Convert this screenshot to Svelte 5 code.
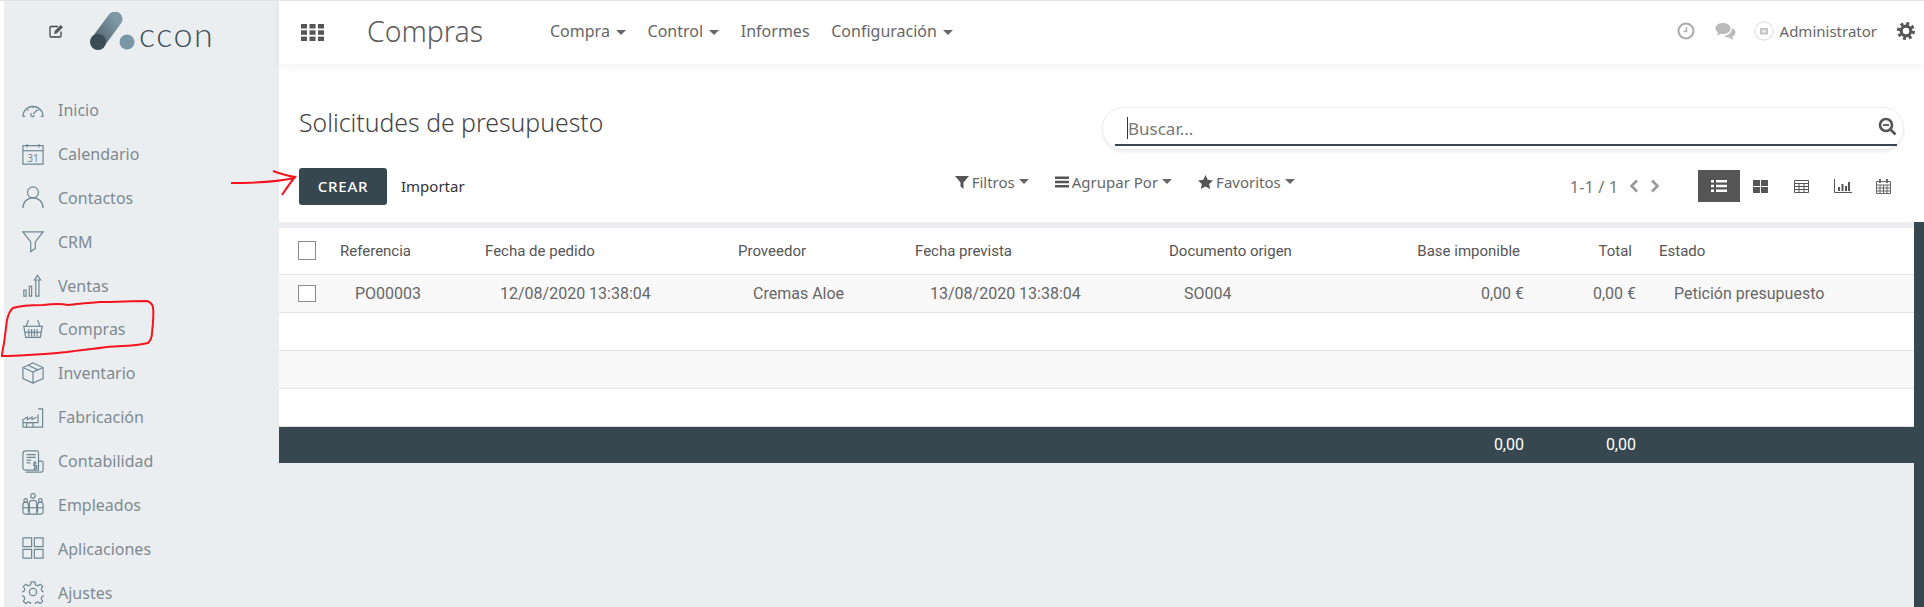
<script>
  const nav = [
    { label: 'Inicio', paths: ['M1 20a11 11 0 0 1 22 0', 'M1 20h2.500M20.500 20H23', 'M12 17.500l4.500-4.500', 'M5.500 12.500l1.500 1M12 9v2M18.500 12.500l-1.500 1M8.500 9.500l.6 1.500M15.500 9.500l-.6 1.500', 'M10.500 16.500a2 2 0 1 0 3 2'] },
    { label: 'Calendario', paths: ['M1 4h22v20H1z', 'M1 9.500h22', 'M5.500 2v4M18.500 2v4'], num: '31' },
    { label: 'Contactos', paths: ['M6 7a6 6 0 1 0 12 0a6 6 0 1 0-12 0', 'M1 24c0-6.500 4.500-11 11-11s11 4.500 11 11'] },
    { label: 'CRM', paths: ['M1 2h22l-8.500 11v7l-5 3.500V13z'] },
    { label: 'Ventas', paths: ['M2 17.500h2.500v6.500H2zM8 13.500h2.500v10.500H8z', 'M15 6.500v17.500h3.500V6.500', 'M13.500 6.500l3.300-5 3.500 5z'] },
    { label: 'Compras', paths: ['M1 9h22', 'M2 9l2 12h16l2-12', 'M7 2L4.500 9M17 2l2.500 7', 'M7.500 12v8M10.500 12v8M13.500 12v8M16.500 12v8', 'M3 15.500h18'] },
    { label: 'Inventario', paths: ['M12 1l11 5v12l-11 5-11-5V6z', 'M1 6l11 5 11-5', 'M12 11v12', 'M6.500 3.500l11 5'] },
    { label: 'Fabricación', paths: ['M1 23V15l5-3v3l5-3v3l5-3', 'M17.500 3h5v20H1', 'M5 23v-5h7v5', 'M1 18h16.500V9'] },
    { label: 'Contabilidad', paths: ['M4 1h12a2 2 0 0 1 2 2v19H4a3 3 0 0 1-3-3V4a3 3 0 0 1 3-3z', 'M18 12h3a2 2 0 0 1 2 2v8a2 2 0 0 1-2 2H4', 'M5 5h10M5 8h10M5 11h5M5 14h4', 'M14 12v10M16 14h-3v3h3v3h-3'] },
    { label: 'Empleados', paths: ['M9.500 3a2.500 2.500 0 1 0 5 0a2.500 2.500 0 1 0-5 0', 'M2 8a2 2 0 1 0 4 0a2 2 0 1 0-4 0M18 8a2 2 0 1 0 4 0a2 2 0 1 0-4 0', 'M1 21V13q0-3 3-3t3 3v8', 'M17 21V13q0-3 3-3t3 3v8', 'M8 23V11q0-3 4-3t4 3v12', 'M1 16h22', 'M1 21q0 2 3 2h16q3 0 3-2'] },
    { label: 'Aplicaciones', paths: ['M1 1h9.500v9.500H1zM13.500 1H23v9.500h-9.500zM1 13.500h9.500V23H1zM13.500 13.500H23V23h-9.500z'] },
    { label: 'Ajustes', paths: ['M8 12a4 4 0 1 0 8 0a4 4 0 1 0-8 0', 'M10 1h4l.6 3 2.700 1.100 2.600-1.700 2.700 2.700-1.700 2.600 1.100 2.700 3 .6v4l-3 .6-1.100 2.700 1.700 2.600-2.700 2.700-2.600-1.700-2.700 1.100-.6 3h-4l-.6-3-2.700-1.100-2.600 1.700-2.700-2.700 1.700-2.600-1.100-2.700-3-.6v-4l3-.6 1.100-2.700-1.700-2.600 2.700-2.700 2.600 1.700L9.400 4z'] }
  ];
  const menus = [
    { label: 'Compra', caret: true },
    { label: 'Control', caret: true },
    { label: 'Informes', caret: false },
    { label: 'Configuración', caret: true }
  ];
  const columns = [
    { label: 'Referencia' },
    { label: 'Fecha de pedido' },
    { label: 'Proveedor' },
    { label: 'Fecha prevista' },
    { label: 'Documento origen' },
    { label: 'Base imponible', num: true },
    { label: 'Total', num: true },
    { label: 'Estado', state: true }
  ];
  const row = ['PO00003', '12/08/2020 13:38:04', 'Cremas Aloe', '13/08/2020 13:38:04', 'SO004', '0,00 €', '0,00 €', 'Petición presupuesto'];
  const blanks = [0, 1, 2];
  const gridDots = [0, 1, 2].flatMap((y) => [0, 1, 2].map((x) => ({ x: x * 8.500, y: y * 6.300 })));
</script>

<div class="shell">
  <aside class="sidebar">
    <div class="brand">
      <svg class="edit" viewBox="0 0 16 14" width="16" height="14">
        <path d="M12 7.500V12a1 1 0 0 1-1 1H2a1 1 0 0 1-1-1V3.500a1 1 0 0 1 1-1h7" fill="none" stroke="#444" stroke-width="1.300" />
        <path d="M5 10l.7-3 6-6 2.300 2.300-6 6z" fill="#555" />
      </svg>
      <div class="logo">
        <svg viewBox="0 0 60 40" width="60" height="40">
          <defs>
            <linearGradient id="bar" x1="0" y1="1" x2="1" y2="0">
              <stop offset="0" stop-color="#52656f" />
              <stop offset="1" stop-color="#7f98a5" />
            </linearGradient>
          </defs>
          <line x1="9" y1="30" x2="26" y2="7" stroke="url(#bar)" stroke-width="15" stroke-linecap="round" />
          <circle cx="9" cy="30" r="8" fill="#3b4c55" />
          <circle cx="38" cy="30" r="7.500" fill="#7b96a4" />
        </svg>
        <span class="wordmark">ccon</span>
      </div>
    </div>
    <nav class="side-nav">
      {#each nav as item}
        <div class="side-item">
          <svg class="side-icon" viewBox="0 0 24 25" width="22" height="23">
            {#each item.paths as d}<path {d} />{/each}
            {#if item.num}<text x="12" y="21.500" text-anchor="middle">{item.num}</text>{/if}
          </svg>
          <span>{item.label}</span>
        </div>
      {/each}
    </nav>
  </aside>

  <main class="main">
    <header class="topbar">
      <svg class="apps" viewBox="0 0 23 17" width="23" height="17">
        {#each gridDots as dot}<rect x={dot.x} y={dot.y} width="6" height="4.500" fill="#555" />{/each}
      </svg>
      <span class="app-title">Compras</span>
      <div class="menus">
        {#each menus as menu}
          <span class="menu">{menu.label}{#if menu.caret}<i class="caret"></i>{/if}</span>
        {/each}
      </div>
      <div class="systray">
        <svg viewBox="0 0 18 18" width="18" height="18" class="clock">
          <circle cx="9" cy="9" r="7.500" fill="none" stroke="#aaa" stroke-width="2" />
          <path d="M9.500 5v4.500H6.500" fill="none" stroke="#aaa" stroke-width="1.400" />
        </svg>
        <svg viewBox="0 0 22 18" width="22" height="18" class="chat">
          <path d="M8 1c4.400 0 7.500 2.200 7.500 5.500S12.400 12 8 12c-.9 0-1.700-.1-2.500-.3L2 14l1-3.300C1.500 9.700.5 8.200.5 6.500.5 3.200 3.600 1 8 1z" fill="#bbb" />
          <path d="M17 6c.1 3.800-3 7.500-8 7.700 1.200 1.200 3 1.800 5 1.800l4 2.500-.7-3.300c2-1 3.200-2.300 3.200-4.200 0-2-1.300-3.600-3.500-4.500z" fill="#bbb" />
        </svg>
        <svg viewBox="0 0 20 20" width="20" height="20" class="avatar">
          <circle cx="10" cy="10" r="9" fill="#fff" stroke="#e4e4e4" stroke-width="1.300" />
          <rect x="6" y="7" width="8" height="6.500" fill="#c4c4c4" />
          <circle cx="10" cy="10.200" r="1.700" fill="#eee" />
        </svg>
        <span class="admin">Administrator</span>
        <svg viewBox="0 0 18 18" width="18" height="18" class="gear">
          <circle cx="9" cy="9" r="7.500" fill="none" stroke="#555" stroke-width="3" stroke-dasharray="3 2.890" />
          <circle cx="9" cy="9" r="4.800" fill="none" stroke="#555" stroke-width="3.200" />
        </svg>
      </div>
    </header>

    <section class="control">
      <div class="head-row">
        <h1>Solicitudes de presupuesto</h1>
        <div class="search">
          <div class="search-field">
            <i class="cursor"></i><span>Buscar...</span>
            <svg viewBox="0 0 19 19" width="19" height="19" class="search-icon">
              <circle cx="8" cy="8" r="6" fill="none" stroke="#555" stroke-width="2.600" />
              <path d="M5 8h6" stroke="#555" stroke-width="1.800" />
              <path d="M12.500 12.500l5 5" stroke="#555" stroke-width="2.600" />
            </svg>
          </div>
        </div>
      </div>
      <div class="tool-row">
        <button class="create">CREAR</button>
        <span class="import">Importar</span>
        <div class="filters">
          <span class="filter">
            <svg viewBox="0 0 14 14" width="14" height="14"><path d="M0 1h14L8.500 7.500V14l-3-2.500v-4z" fill="#555" /></svg>
            Filtros<i class="caret"></i>
          </span>
          <span class="filter">
            <svg viewBox="0 0 14 14" width="14" height="14"><path d="M0 1.500h14v2.400H0zM0 5.800h14v2.400H0zM0 10.100h14v2.400H0z" fill="#555" /></svg>
            Agrupar Por<i class="caret"></i>
          </span>
          <span class="filter">
            <svg viewBox="0 0 15 14" width="15" height="14"><path d="M7.500 0l2.200 4.800 5.300.6-3.900 3.500 1.100 5.100-4.700-2.600L2.800 14l1.100-5.100L0 5.400l5.300-.6z" fill="#555" /></svg>
            Favoritos<i class="caret"></i>
          </span>
        </div>
        <div class="pager">
          <span>1-1 / 1</span>
          <svg viewBox="0 0 10 14" width="10" height="14"><path d="M8 1.500L2.500 7 8 12.500" fill="none" stroke="#999" stroke-width="2.600" /></svg>
          <svg viewBox="0 0 10 14" width="10" height="14"><path d="M2 1.500L7.500 7 2 12.500" fill="none" stroke="#999" stroke-width="2.600" /></svg>
        </div>
        <div class="views">
          <span class="view active">
            <svg viewBox="0 0 16 14" width="16" height="14"><path d="M0 1h3v2.600H0zM5 1h11v2.600H5zM0 5.700h3v2.600H0zM5 5.700h11v2.600H5zM0 10.400h3V13H0zM5 10.400h11V13H5z" fill="#fff" /></svg>
          </span>
          <span class="view">
            <svg viewBox="0 0 15 13" width="15" height="13"><path d="M0 0h7v6H0zM8 0h7v6H8zM0 7h7v6H0zM8 7h7v6H8z" fill="#555" /></svg>
          </span>
          <span class="view">
            <svg viewBox="0 0 15 13" width="15" height="13"><path d="M.5.500h14v12H.5zM.5 3.500h14M.5 6.500h14M.5 9.500h14M5 3.500v9M10 3.500v9" fill="none" stroke="#555" /></svg>
          </span>
          <span class="view">
            <svg viewBox="0 0 18 14" width="18" height="14"><path d="M.5 0v13.500H18" fill="none" stroke="#555" /><path d="M4 8h2v4H4zM7.500 5h2v7h-2zM11 7h2v5h-2zM14 3h2v9h-2z" fill="#555" /></svg>
          </span>
          <span class="view">
            <svg viewBox="0 0 15 15" width="15" height="15"><path d="M.5 2.500h14v12H.5zM.5 6h14M.5 9h14M.5 12h14M4 6v8.500M7.500 6v8.500M11 6v8.500" fill="none" stroke="#666" /><path d="M3 0h2v4H3zM10 0h2v4h-2z" fill="#666" /></svg>
          </span>
        </div>
      </div>
    </section>

    <div class="content">
      <table>
        <colgroup>
          <col class="c0" /><col class="c1" /><col class="c2" /><col class="c3" /><col class="c4" /><col class="c5" /><col class="c6" /><col class="c7" /><col />
        </colgroup>
        <thead>
          <tr>
            <th class="check"><i class="box head-box"></i></th>
            {#each columns as col}
              <th class:num={col.num} class:state={col.state}>{col.label}</th>
            {/each}
          </tr>
        </thead>
        <tbody>
          <tr class="odd">
            <td class="check"><i class="box"></i></td>
            {#each row as cell, i}
              <td class:num={columns[i].num} class:state={columns[i].state}>{cell}</td>
            {/each}
          </tr>
          {#each blanks as blank}
            <tr class:odd={blank === 1}><td colspan="9"></td></tr>
          {/each}
        </tbody>
        <tfoot>
          <tr>
            <td colspan="7" class="num sum">0,00</td>
            <td class="num sum">0,00</td>
            <td></td>
          </tr>
        </tfoot>
      </table>
      <div class="rail"></div>
    </div>
  </main>

  <svg class="marks" viewBox="0 0 300 370" width="300" height="370">
    <path d="M231 183c20 0 45-1 64-5M273 171c8 3 15 5 22 6-5 6-9 12-13 18" />
    <path d="M68 305c-8-2-17-1-25 0-12 0-24 1-30 3-4 3-5 8-6 12-1 8-2 16-3 23-1 5-2 10-2 13 22 0 43-2 65-4 13-2 27-3 40-5 14-1 30-1 41-4 3-3 4-6 4-10 1-9 2-18 1-26-1-3-3-5-6-6-15 0-31 1-47 1-12 1-24 2-32 3z" />
  </svg>
</div>

<style>
  :global(body) {
    margin: 0;
    background: #fff;
  }
  .shell {
    position: relative;
    display: flex;
    width: 1924px;
    height: 607px;
    overflow: hidden;
    border-top: 1px solid #dfe2e7;
    box-sizing: border-box;
    padding-left: 4px;
    font-family: "Noto Sans", sans-serif;
    color: #555;
  }
  .sidebar {
    flex: 0 0 275px;
    background: #ebeef1;
  }
  .brand {
    display: flex;
    align-items: flex-start;
    height: 87px;
  }
  .edit {
    margin: 23px 0 0 45px;
  }
  .logo {
    display: flex;
    align-items: flex-end;
    margin: 11px 0 0 24px;
    height: 40px;
  }
  .logo svg {
    flex: none;
  }
  .wordmark {
    margin-left: -10px;
    font-family: "Lato", sans-serif;
    font-weight: 300;
    font-size: 34px;
    letter-spacing: 1.500px;
    line-height: 40px;
    color: #3d4e57;
    height: 40px;
    position: relative;
    top: 2px;
  }
  .side-item {
    display: flex;
    align-items: center;
    height: 43.900px;
    padding-left: 18px;
    font-size: 16px;
    color: #7f8a8f;
  }
  .side-item span {
    margin-left: 14px;
  }
  .side-icon {
    fill: none;
    stroke: #6f8791;
    stroke-width: 1.300;
  }
  .side-icon text {
    fill: #6f8791;
    stroke: none;
    font-size: 11px;
    font-family: "Noto Sans", sans-serif;
  }
  .main {
    flex: 1;
    display: flex;
    flex-direction: column;
    min-width: 0;
    background: #fff;
  }
  .topbar {
    position: relative;
    display: flex;
    align-items: center;
    flex: 0 0 63px;
    box-sizing: border-box;
    background: #fff;
    box-shadow: 0 3px 10px rgba(0, 0, 0, 0.05);
    padding: 0 0 3px 22px;
  }
  .apps {
    flex: none;
    margin-top: 2px;
  }
  .app-title {
    margin-left: 43px;
    font-size: 28.400px;
    font-weight: 300;
    color: #5b5b5b;
    width: 183px;
  }
  .menus {
    display: flex;
    gap: 21.700px;
    font-size: 16px;
    color: #666;
  }
  .caret {
    display: inline-block;
    vertical-align: middle;
    margin-left: 6px;
    border-top: 5px solid #666;
    border-left: 5px solid transparent;
    border-right: 5px solid transparent;
  }
  .systray {
    margin-left: auto;
    display: flex;
    align-items: center;
    padding-right: 9px;
    font-size: 15px;
    color: #666;
  }
  .chat {
    margin-left: 20px;
  }
  .avatar {
    margin-left: 17px;
  }
  .admin {
    margin-left: 6px;
  }
  .gear {
    margin-left: 20px;
  }
  .control {
    flex: 0 0 158px;
    padding: 0 20px;
    box-sizing: border-box;
  }
  .head-row {
    display: flex;
    align-items: flex-start;
    justify-content: space-between;
    padding-top: 43px;
    height: 103px;
    box-sizing: border-box;
  }
  h1 {
    margin: -2px 0 0;
    font-size: 24.800px;
    font-weight: 300;
    color: #444;
    line-height: 34px;
  }
  .search {
    width: 802px;
    height: 43px;
    box-sizing: border-box;
    padding: 0 6px 0 12px;
    border: 1px solid #eee;
    border-radius: 21px;
    box-shadow: 0 2px 3px rgba(0, 0, 0, 0.08);
    background: #fff;
  }
  .search-field {
    position: relative;
    display: flex;
    align-items: center;
    height: 38px;
    box-sizing: border-box;
    border-bottom: 2px solid #37474f;
    padding-left: 12px;
    padding-top: 4px;
    font-size: 17px;
    color: #777;
  }
  .cursor {
    width: 1px;
    height: 22px;
    background: #333;
  }
  .search-icon {
    margin-left: auto;
    margin-top: -3px;
  }
  .tool-row {
    display: flex;
    align-items: center;
    height: 38px;
    white-space: nowrap;
  }
  .tool-row > * {
    flex: none;
  }
  .create {
    width: 88px;
    height: 37px;
    border: 0;
    border-radius: 3px;
    background: #37474f;
    color: #fff;
    font-family: inherit;
    font-size: 15px;
    font-weight: 500;
    letter-spacing: 0.800px;
  }
  .import {
    margin-left: 14px;
    font-size: 15px;
    color: #333;
  }
  .filters {
    display: flex;
    gap: 26px;
    margin-left: 490px;
    margin-top: -9px;
    font-size: 15px;
    color: #666;
  }
  .filter {
    display: flex;
    align-items: center;
  }
  .filter svg {
    margin-right: 3px;
  }
  .filter .caret {
    margin-left: 4px;
  }
  .pager {
    display: flex;
    align-items: center;
    gap: 11px;
    margin-left: 275px;
    font-size: 16.500px;
    color: #777;
  }
  .views {
    display: flex;
    align-items: center;
    margin-left: 38px;
    height: 32px;
  }
  .view {
    display: flex;
    align-items: center;
    justify-content: center;
    width: 41px;
    height: 32px;
  }
  .view.active {
    width: 42px;
    background: #555;
  }
  .content {
    flex: 1;
    display: flex;
    align-items: flex-start;
    background: #ebeef1;
    padding-top: 6px;
  }
  .rail {
    flex: 0 0 10px;
    align-self: stretch;
    margin-top: -6px;
    background: #37474f;
  }
  table {
    flex: 1;
    width: 1635px;
    table-layout: fixed;
    border-collapse: collapse;
    background: #fff;
    font-family: "Roboto", sans-serif;
    font-size: 16px;
    color: #666;
  }
  .c0 { width: 61px; }
  .c1 { width: 145px; }
  .c2 { width: 253px; }
  .c3 { width: 177px; }
  .c4 { width: 254px; }
  .c5 { width: 200px; }
  .c6 { width: 155px; }
  .c7 { width: 112px; }
  th {
    height: 46px;
    box-sizing: border-box;
    padding: 0;
    text-align: left;
    font-weight: 400;
    font-size: 15px;
    color: #555;
    border-bottom: 1px solid #e2e2e2;
  }
  th.num {
    text-align: right;
    padding-right: 4px;
  }
  th.state {
    padding-left: 23px;
  }
  th.state, td.state {
    white-space: nowrap;
  }
  td {
    height: 38px;
    padding: 0 0 0 15px;
    box-sizing: border-box;
    border-bottom: 1px solid #e2e2e2;
  }
  td.num {
    text-align: right;
    padding: 0;
  }
  td.state {
    padding-left: 38px;
  }
  td.check, th.check {
    padding: 0 0 0 19px;
  }
  .odd {
    background: #f9f9f9;
  }
  .box {
    display: block;
    width: 18px;
    height: 17px;
    border: 1px solid #8a8a8a;
    box-sizing: border-box;
    background: #fff;
  }
  .head-box {
    height: 19px;
  }
  tfoot td {
    height: 37px;
    border: 0;
    background: #37474f;
    color: #fff;
  }
  .marks {
    position: absolute;
    left: 0;
    top: -1px;
    fill: none;
    stroke: #f5141e;
    stroke-width: 2;
    pointer-events: none;
  }
</style>
